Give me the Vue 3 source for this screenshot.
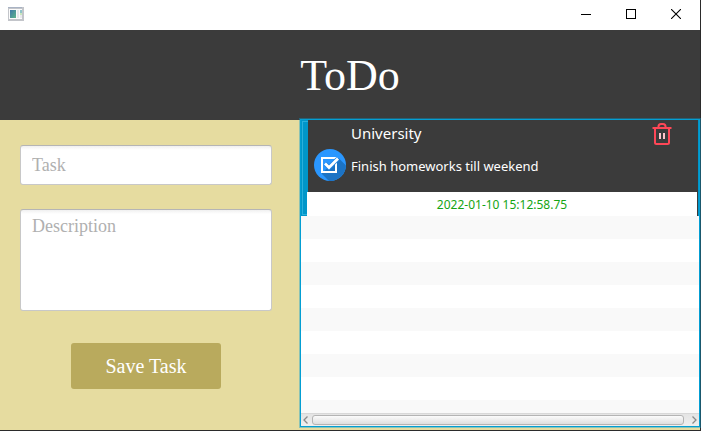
<script setup>
import { ref } from 'vue'

const task = ref('')
const description = ref('')
const items = ref([
  { id: 1, title: 'University', text: 'Finish homeworks till weekend', date: '2022-01-10 15:12:58.75' }
])

function saveTask() {
  if (!task.value.trim()) return
  const now = new Date()
  items.value.push({
    id: now.getTime(),
    title: task.value,
    text: description.value,
    date: now.toISOString().replace('T', ' ').slice(0, 22)
  })
  task.value = ''
  description.value = ''
}

function removeTask(id) {
  items.value = items.value.filter((item) => item.id !== id)
}
</script>

<template>
  <div class="window">
    <div class="titlebar">
      <svg class="app-icon" width="16" height="14" viewBox="0 0 16 14" aria-hidden="true">
        <defs>
          <linearGradient id="pane" x1="0" y1="0" x2="1" y2="1">
            <stop offset="0" stop-color="#3f78a8" />
            <stop offset="1" stop-color="#5db58a" />
          </linearGradient>
        </defs>
        <rect x="0" y="0" width="16" height="14" fill="#c3c5ca" />
        <rect x="0" y="0" width="14" height="1" fill="#a9b3c4" />
        <rect x="1" y="2" width="13" height="10" fill="#fbfbfb" />
        <rect x="2" y="3" width="6" height="8" fill="url(#pane)" />
        <rect x="9" y="3" width="2" height="8" fill="#e6e6ea" />
        <rect x="12" y="3" width="2" height="3" fill="#8fc4c8" />
        <rect x="12" y="6" width="2" height="2" fill="#c9e6bd" />
        <rect x="12" y="8" width="2" height="3" fill="#e9e9ee" />
      </svg>
      <div class="controls">
        <button type="button" aria-label="Minimize">
          <svg width="10" height="10" viewBox="0 0 10 10"><path d="M0 5.500H10" stroke="#000" fill="none" /></svg>
        </button>
        <button type="button" aria-label="Maximize">
          <svg width="10" height="10" viewBox="0 0 10 10"><rect x="0.500" y="0.500" width="9" height="9" stroke="#000" fill="none" /></svg>
        </button>
        <button type="button" aria-label="Close">
          <svg width="10" height="10" viewBox="0 0 10 10"><path d="M0 0L10 10M10 0L0 10" stroke="#000" stroke-width="1.100" fill="none" /></svg>
        </button>
      </div>
    </div>

    <header class="header"><h1>ToDo</h1></header>

    <main class="content">
      <form class="form" @submit.prevent="saveTask">
        <input v-model="task" class="field" type="text" placeholder="Task" aria-label="Task" />
        <textarea v-model="description" class="field area" placeholder="Description" aria-label="Description"></textarea>
        <button class="save" type="submit">Save Task</button>
      </form>

      <section class="list" aria-label="Tasks">
        <div class="rows">
          <article v-for="item in items" :key="item.id" class="cell">
            <div class="card">
              <div class="card-main">
                <svg class="check" width="32" height="32" viewBox="0 0 32 32" aria-hidden="true">
                  <clipPath id="disc"><circle cx="16" cy="16" r="16" /></clipPath>
                  <circle cx="16" cy="16" r="16" fill="#2a97ff" />
                  <path d="M24.500 9L34 18.500V34H17L7.500 24.500Z" fill="#1c73c4" clip-path="url(#disc)" />
                  <rect x="8" y="9" width="14" height="14" fill="none" stroke="#fff" stroke-width="2" />
                  <path d="M11 14.500L15 18.500L24 9.500" fill="none" stroke="#2286e4" stroke-width="4.500" />
                  <path d="M11 14.500L15 18.500L24 9.500" fill="none" stroke="#fff" stroke-width="2.800" />
                </svg>
                <div class="texts">
                  <h2>{{ item.title }}</h2>
                  <p>{{ item.text }}</p>
                </div>
                <button class="delete" type="button" aria-label="Delete task" @click="removeTask(item.id)">
                  <svg width="20" height="22" viewBox="0 0 20 22">
                    <g fill="none" stroke="#ff4757" stroke-width="2">
                      <path d="M0.500 5H19.500" />
                      <path d="M3 5V19.500Q3 21 4.500 21H15.500Q17 21 17 19.500V5" />
                      <path d="M6.500 4.500V3.500Q6.500 1 9 1H11Q13.500 1 13.500 3.500V4.500" />
                    </g>
                    <path d="M7 10H9V16H7ZM11 10H13V16H11Z" fill="#ffc5cb" />
                  </svg>
                </button>
              </div>
              <time class="date">{{ item.date }}</time>
            </div>
          </article>
          <div class="stripes"></div>
        </div>
        <div class="scrollbar" aria-hidden="true">
          <svg width="5" height="8" viewBox="0 0 5 8"><path d="M4.500 0.500L1 4L4.500 7.500" fill="none" stroke="#8a8a8a" stroke-width="1.300" /></svg>
          <div class="thumb"></div>
          <svg width="5" height="8" viewBox="0 0 5 8"><path d="M0.500 0.500L4 4L0.500 7.500" fill="none" stroke="#8a8a8a" stroke-width="1.300" /></svg>
        </div>
      </section>
    </main>
  </div>
</template>

<style>
body {
  background: #2b2b2b;
}
</style>

<style scoped>
.window,
.window * {
  box-sizing: border-box;
}

.window {
  display: flex;
  flex-direction: column;
  min-height: 100vh;
  border: solid #2b2b2b;
  border-width: 0 1px 1px 0;
  background: #e6dca0;
  font-family: "Noto Sans", "Open Sans", sans-serif;
}

h1,
h2,
p {
  margin: 0;
  font-weight: 400;
}

button {
  border: 0;
  padding: 0;
  background: none;
}

svg {
  display: block;
  flex: none;
}

.titlebar {
  display: flex;
  justify-content: space-between;
  height: 30px;
  padding-left: 8px;
  background: #fff;
}

.app-icon {
  margin-top: 7px;
}

.controls {
  display: flex;
  padding-right: 1px;
}

.controls button {
  display: flex;
  width: 45px;
  padding: 9px 0 0 17px;
}

.header {
  display: flex;
  justify-content: center;
  height: 90px;
  background: #3b3b3b;
}

.header h1 {
  padding-top: 21px;
  color: #fff;
  font: 44px/50px "Liberation Serif", serif;
}

.content {
  flex: 1;
  display: grid;
  grid-template-columns: 3fr 4fr;
}

.form {
  display: flex;
  flex-direction: column;
  gap: 24px;
  padding: 25px 28px 0 20px;
}

.field {
  width: 100%;
  height: 40px;
  margin: 0;
  padding: 0 11px;
  border: 1px solid #c8c8c8;
  border-top-color: #b5b5b5;
  border-radius: 3px;
  outline: none;
  background: linear-gradient(#f0f0f0, #fff 4px);
  color: #333;
  font: 18px/22px "Liberation Serif", serif;
}

.area {
  height: 102px;
  padding: 5px 11px;
  resize: none;
}

.field::placeholder {
  color: #b0b0b0;
  opacity: 1;
}

.save {
  align-self: center;
  width: 150px;
  height: 46px;
  margin-top: 8px;
  border-radius: 3px;
  background: #b9aa5d;
  color: #fff;
  font: 20px/24px "Liberation Serif", serif;
}

.list {
  display: flex;
  flex-direction: column;
  margin: -1px 0 3px;
  border: 1px solid #039ed3;
  box-shadow: 0 0 0 1px rgba(3, 158, 211, 0.4);
  background: #fff;
}

.rows {
  flex: 1;
  display: flex;
  flex-direction: column;
}

.cell {
  padding: 0 1px 0 7px;
  background: #0096c9;
  box-shadow: inset 0 0 0 1px #0096c9, inset 0 0 0 2px #2ab0dc;
}

.card {
  background: #3b3b3b;
}

.card-main {
  display: flex;
  height: 72px;
  padding: 0 26px 0 6px;
}

.check {
  margin-top: 29px;
}

.texts {
  flex: 1;
  padding: 3px 0 0 5px;
  color: #fff;
}

.texts h2 {
  font-size: 15px;
  line-height: 20px;
}

.texts p {
  margin-top: 13px;
  font-size: 13px;
  line-height: 20px;
}

.delete {
  align-self: flex-start;
  padding-top: 3px;
}

.date {
  display: block;
  height: 24px;
  margin: 0 1px 0 -1px;
  background: #fff;
  color: #14a514;
  font-size: 12px;
  line-height: 26px;
  text-align: center;
}

.stripes {
  flex: 1;
  background: repeating-linear-gradient(#f9f9f9 0 23px, #fff 23px 46px);
}

.scrollbar {
  display: flex;
  align-items: center;
  gap: 4px;
  height: 13px;
  padding: 0 2px;
  border-top: 1px solid #d8d8d8;
  background: linear-gradient(#e4e4e4, #efefef);
}

.thumb {
  flex: 1;
  height: 10px;
  margin-right: 4px;
  border: 1px solid #b4b4b4;
  border-radius: 3px;
  background: linear-gradient(#fbfbfb, #dedede);
}
</style>
